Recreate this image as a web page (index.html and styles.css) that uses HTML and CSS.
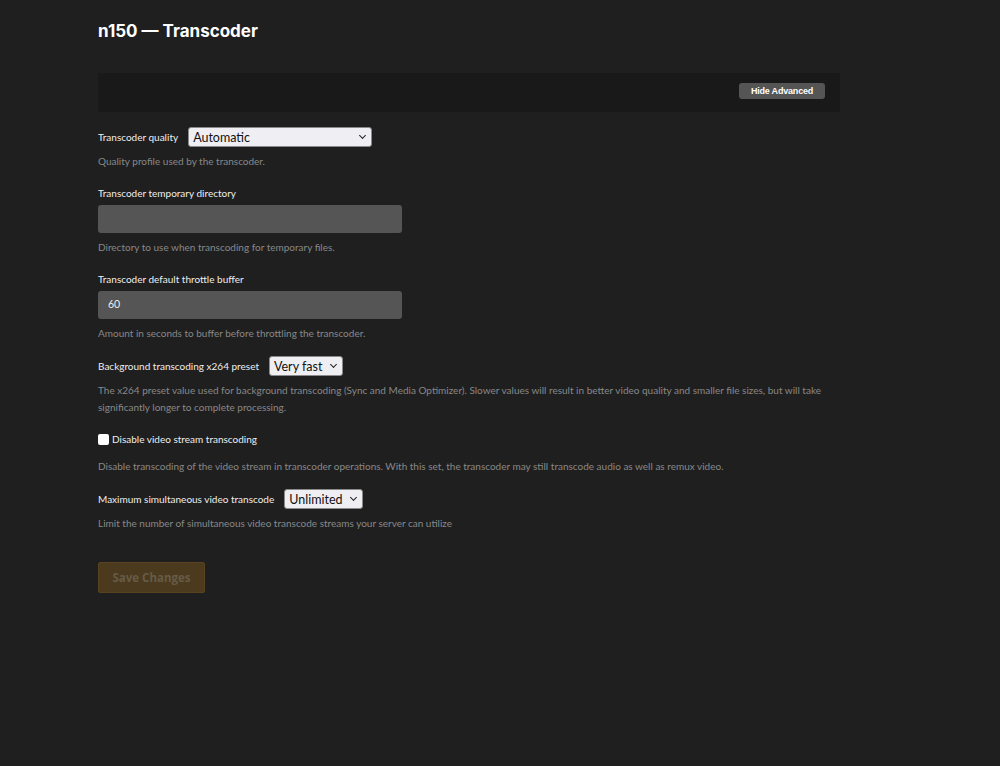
FILE: index.html
```html
<!DOCTYPE html>
<html lang="en">
<head>
    <meta charset="UTF-8">
    <title>n150 — Transcoder</title>
    <link rel="stylesheet" href="styles.css">
</head>
<body>
    <div class="page">
        <h1 class="page-title">n150 — Transcoder</h1>

        <!-- Barra de ações -->
        <div class="toolbar">
            <button class="btn-advanced">Hide Advanced</button>
        </div>

        <form class="settings">
            <div class="field">
                <div class="inline-row">
                    <label class="field-label">Transcoder quality</label>
                    <span class="select select-quality">Automatic<span class="chev"></span></span>
                </div>
                <p class="help">Quality profile used by the transcoder.</p>
            </div>

            <div class="field">
                <label class="field-label block">Transcoder temporary directory</label>
                <div class="text-input"></div>
                <p class="help">Directory to use when transcoding for temporary files.</p>
            </div>

            <div class="field">
                <label class="field-label block">Transcoder default throttle buffer</label>
                <div class="text-input">60</div>
                <p class="help">Amount in seconds to buffer before throttling the transcoder.</p>
            </div>

            <div class="field">
                <div class="inline-row">
                    <label class="field-label">Background transcoding x264 preset</label>
                    <span class="select">Very fast<span class="chev"></span></span>
                </div>
                <p class="help">The x264 preset value used for background transcoding (Sync and Media Optimizer). Slower values will result in better video quality and smaller file sizes, but will take significantly longer to complete processing.</p>
            </div>

            <div class="field">
                <label class="check-row"><span class="checkbox"></span>Disable video stream transcoding</label>
                <p class="help">Disable transcoding of the video stream in transcoder operations. With this set, the transcoder may still transcode audio as well as remux video.</p>
            </div>

            <div class="field">
                <div class="inline-row">
                    <label class="field-label">Maximum simultaneous video transcode</label>
                    <span class="select">Unlimited<span class="chev"></span></span>
                </div>
                <p class="help">Limit the number of simultaneous video transcode streams your server can utilize</p>
            </div>

            <button type="button" class="btn-save">Save Changes</button>
        </form>
    </div>
</body>
</html>
```

FILE: styles.css
```css
* {
    margin: 0;
    padding: 0;
    box-sizing: border-box;
}

body {
    background: #1f1f1f;
    color: #eee;
    font-family: Lato, "Open Sans", sans-serif;
    min-height: 100vh;
}

.page {
    width: 742px;
    margin-left: 98px;
    padding-top: 19px;
}

/* Título */
.page-title {
    font-family: Inter, sans-serif;
    font-size: 17px;
    font-weight: 700;
    color: #fff;
    line-height: 24px;
    margin-bottom: 30px;
}

/* Barra de ações */
.toolbar {
    background: #191919;
    height: 39px;
    display: flex;
    justify-content: flex-end;
    align-items: flex-start;
    padding: 10px 15px 0 0;
    margin-bottom: 17px;
}

.btn-advanced {
    background: #555;
    color: #fff;
    border: none;
    border-radius: 3px;
    font-family: "Liberation Sans", sans-serif;
    font-weight: 700;
    font-size: 9px;
    height: 16px;
    width: 86px;
    letter-spacing: -0.2px;
}

/* Campos */
.field {
    margin-bottom: 16px;
}

.inline-row {
    display: flex;
    align-items: center;
    margin-top: -2px;
}

.field-label {
    font-size: 10px;
    color: #eee;
}

.field-label.block {
    display: block;
    line-height: 15px;
    margin-bottom: 4px;
}

.select {
    display: inline-flex;
    align-items: center;
    justify-content: space-between;
    height: 20px;
    margin-left: 10px;
    padding: 0 6px 0 4px;
    background: #efeff3;
    border: 1px solid #8a8a8a;
    border-radius: 3px;
    color: #111;
    font-size: 12.5px;
}

.select-quality {
    width: 184px;
}

.chev {
    width: 5px;
    height: 5px;
    border-right: 1.5px solid #222;
    border-bottom: 1.5px solid #222;
    transform: rotate(45deg);
    margin: -3px 0 0 9px;
}

.text-input {
    width: 304px;
    height: 28px;
    background: #555;
    border-radius: 3px;
    font-size: 10.5px;
    color: #eee;
    padding: 7px 10px;
}

.help {
    font-size: 10px;
    color: #888;
    line-height: 17px;
    margin-top: 6px;
}

.inline-row + .help {
    margin-top: 6px;
}

/* Caixa de seleção */
.check-row {
    display: flex;
    align-items: center;
    font-size: 10px;
    color: #eee;
    line-height: 15px;
}

.checkbox {
    width: 11px;
    height: 11px;
    background: #fff;
    border-radius: 2px;
    margin-right: 3px;
}

.check-row + .help {
    margin-top: 11px;
}

/* Botão salvar */
.btn-save {
    margin-top: 14px;
    width: 107px;
    height: 31px;
    background: #4b3a1d;
    border: 1px solid #57431f;
    border-radius: 2px;
    color: #665a48;
    font-family: "Open Sans", sans-serif;
    font-weight: 700;
    font-size: 11.5px;
}
```
